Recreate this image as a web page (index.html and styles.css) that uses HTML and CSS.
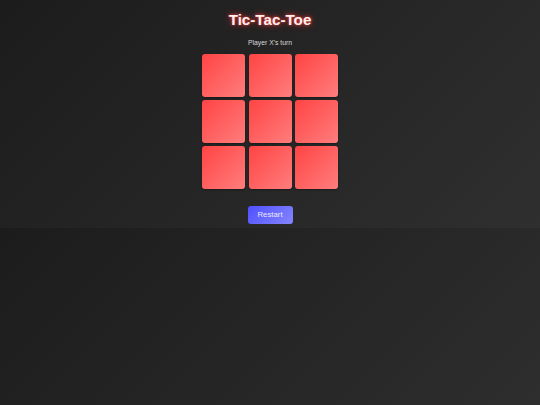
FILE: index.html
```html
<!DOCTYPE html>
<html lang="en">
<head>
<meta charset="utf-8">
<title>Tic-Tac-Toe</title>
<link rel="stylesheet" href="styles.css">
</head>
<body>
  <main class="game">
    <h1 class="title">Tic-Tac-Toe</h1>
    <p class="status">Player X's turn</p>
    <div class="board">
      <button class="cell"></button>
      <button class="cell"></button>
      <button class="cell"></button>
      <button class="cell"></button>
      <button class="cell"></button>
      <button class="cell"></button>
      <button class="cell"></button>
      <button class="cell"></button>
      <button class="cell"></button>
    </div>
    <button class="restart">Restart</button>
  </main>
</body>
</html>
```

FILE: styles.css
```css
html {
  margin: 0;
}
body {
  margin: 0;
  font-family: "Liberation Sans", Arial, sans-serif;
  background: linear-gradient(135deg, #1c1c1c 0%, #2f2f2f 100%);
  color: #e6e6e6;
}
.game {
  display: flex;
  flex-direction: column;
  align-items: center;
  padding: 10.5px 0 3.5px;
}
.title {
  margin: 0;
  font-size: 15.2px;
  line-height: 17px;
  font-weight: bold;
  color: #fff0f0;
  text-shadow: 0 0 3px #ff3b3b, 0 0 7px rgba(255, 50, 50, 0.7);
}
.status {
  margin: 11px 0 0;
  font-size: 6.8px;
  line-height: 8px;
  color: #d8d8d8;
}
.board {
  margin-top: 7.5px;
  display: grid;
  grid-template-columns: repeat(3, 43px);
  grid-template-rows: repeat(3, 42.5px);
  gap: 3.5px;
}
.cell {
  border: none;
  padding: 0;
  border-radius: 3px;
  background: linear-gradient(135deg, #ff4444 0%, #ff7d7d 100%);
  box-shadow: 0 1px 2px rgba(0, 0, 0, 0.35);
}
.restart {
  margin-top: 17px;
  width: 45px;
  height: 18.5px;
  border: none;
  border-radius: 3px;
  padding: 0;
  font-family: "Liberation Sans", Arial, sans-serif;
  font-size: 7.8px;
  color: #e8e8ff;
  background: linear-gradient(135deg, #5050ff 0%, #8585ff 100%);
}
```
